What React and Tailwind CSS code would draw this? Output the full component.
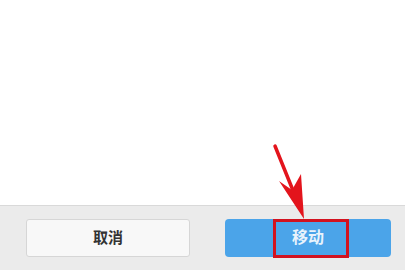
import React from 'react';

const App = () => {
  return (
    <main
      className="relative w-[405px] h-[270px] flex flex-col bg-white overflow-hidden"
      style={{ fontFamily: '"Liberation Sans", "Noto Sans CJK SC", sans-serif' }}
    >
      <div className="flex-1 bg-white" />

      <div className="h-[65px] bg-[#ebebeb] border-t border-[#d9d9d9] flex items-start pt-[13px] pl-[26px]">
        <button className="w-[164px] h-[38px] rounded-[3px] bg-[#f8f8f8] border border-[#d6d6d6] text-[15px] font-bold text-[#333] flex items-center justify-center">
          取消
        </button>
        <button className="relative ml-[35px] w-[166px] h-[38px] rounded-[4px] bg-[#4ba4e9] text-[16px] font-bold text-[#e8f3fc] flex items-center justify-center">
          <span>移动</span>
          <span className="absolute left-[48px] w-[76px] top-0 -bottom-[1px] border-[3px] border-[#d2121f]" />
        </button>
      </div>

      <svg className="absolute left-0 top-0 pointer-events-none" width="405" height="270" viewBox="0 0 405 270">
        <line x1="275" y1="146" x2="294" y2="193" stroke="#e3141c" strokeWidth="3.5" strokeLinecap="round" />
        <polygon points="304,219 279,181 292,190 301,174" fill="#e3141c" />
      </svg>
    </main>
  );
};

export default App;
